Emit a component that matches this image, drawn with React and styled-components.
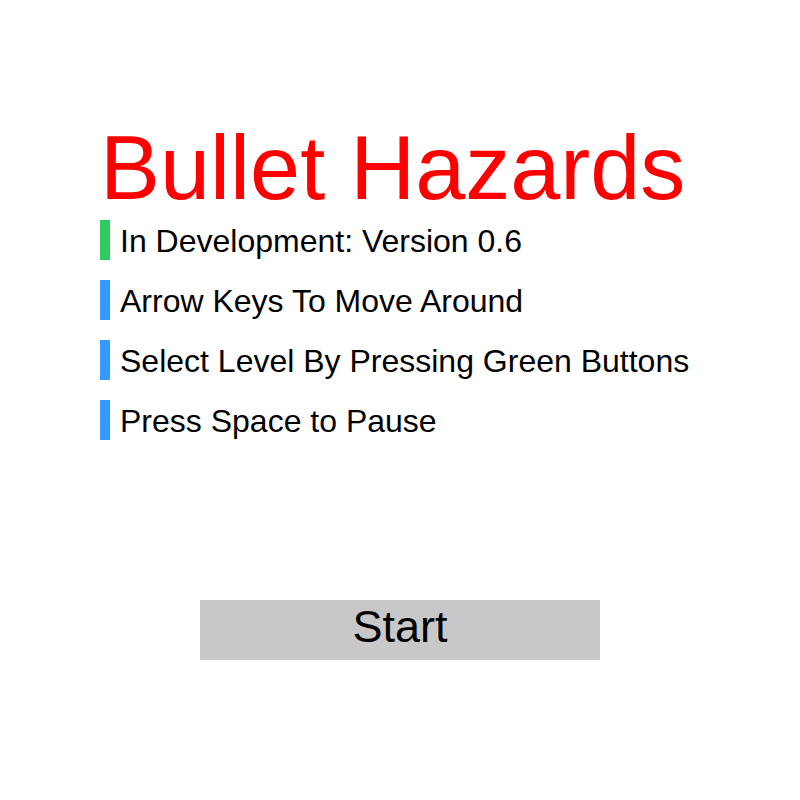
import React from 'react';
import styled, { createGlobalStyle } from 'styled-components';

const Global = createGlobalStyle`
  html, body {
    margin: 0;
    padding: 0;
    background: #fff;
    font-family: "Liberation Sans", Arial, Helvetica, sans-serif;
  }
`;

const items = [
  { text: 'In Development: Version 0.6', color: '#2ecc5f' },
  { text: 'Arrow Keys To Move Around', color: '#3399ff' },
  { text: 'Select Level By Pressing Green Buttons', color: '#3399ff' },
  { text: 'Press Space to Pause', color: '#3399ff' },
];

const App = () => {
  return (
    <Page>
      <Global />
      <Menu>
        <Title>Bullet Hazards</Title>
        <List>
          {items.map((it) => (
            <Item key={it.text} $bar={it.color}>{it.text}</Item>
          ))}
        </List>
      </Menu>
      <StartButton>Start</StartButton>
    </Page>
  );
};

const Page = styled.div`
  width: 800px;
  height: 800px;
  display: flex;
  flex-direction: column;
  align-items: center;
`;

const Menu = styled.div`
  width: 600px;
  padding-top: 118px;
`;

const Title = styled.h1`
  margin: 0 0 2px 0;
  font-size: 90px;
  line-height: 100px;
  font-weight: normal;
  color: #ff0000;
`;

const List = styled.ul`
  list-style: none;
  margin: 0;
  padding: 0;
  display: flex;
  flex-direction: column;
  gap: 20px;
`;

const Item = styled.li`
  height: 40px;
  line-height: 43px;
  font-size: 32px;
  color: #000;
  border-left: 10px solid ${(p) => p.$bar};
  padding-left: 10px;
`;

const StartButton = styled.button`
  margin-top: 160px;
  width: 400px;
  height: 60px;
  border: none;
  background: #c8c8c8;
  font-family: inherit;
  font-size: 45px;
  line-height: 51px;
  color: #000;
  padding: 0 0 7px 0;
`;

export default App;
